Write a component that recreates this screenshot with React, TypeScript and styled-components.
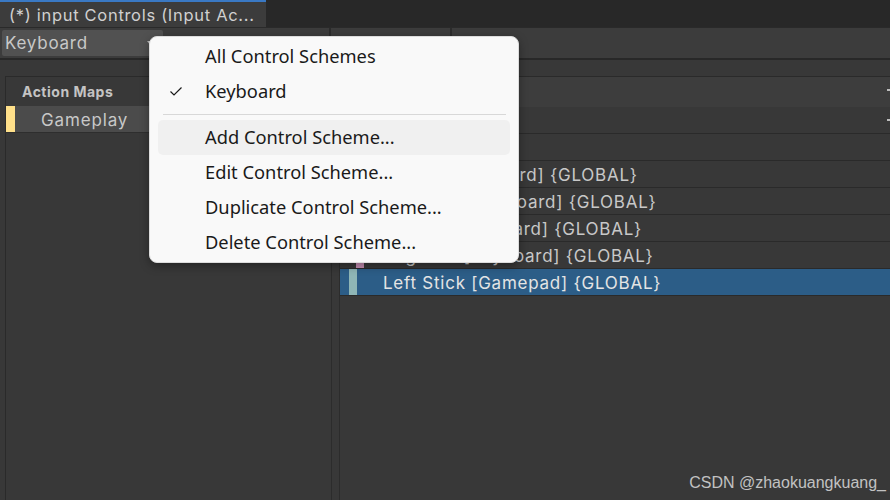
import styled, { createGlobalStyle } from "styled-components";

const GlobalStyle = createGlobalStyle`
  html, body {
    margin: 0;
    padding: 0;
    background: #383838;
  }
  * {
    box-sizing: border-box;
  }
`;

interface IRow {
  label: string;
  kind: "action" | "composite" | "part" | "binding";
  selected?: boolean;
}

const rows: IRow[] = [
  { label: "Move", kind: "action" },
  { label: "WASD", kind: "composite" },
  { label: "Up: W [Keyboard] {GLOBAL}", kind: "part" },
  { label: "Down: S [Keyboard] {GLOBAL}", kind: "part" },
  { label: "Left: A [Keyboard] {GLOBAL}", kind: "part" },
  { label: "Right: D [Keyboard] {GLOBAL}", kind: "part" },
  { label: "Left Stick [Gamepad] {GLOBAL}", kind: "binding", selected: true },
];

const menuItems = [
  { label: "All Control Schemes" },
  { label: "Keyboard", checked: true },
  { separator: true },
  { label: "Add Control Scheme...", hover: true },
  { label: "Edit Control Scheme..." },
  { label: "Duplicate Control Scheme..." },
  { label: "Delete Control Scheme..." },
];

const markerColor = {
  action: "transparent",
  composite: "#8cb9b4",
  part: "#c68fb3",
  binding: "#8fb6b6",
};

const App = () => {
  return (
    <Window>
      <GlobalStyle />
      <TabBar>
        <Tab>(*) input Controls (Input Ac...</Tab>
      </TabBar>
      <Toolbar>
        <SchemeDropdown>
          <span>Keyboard</span>
          <DropArrow />
        </SchemeDropdown>
        <ToolSlot width={166} />
        <ToolDivider />
        <ToolSlot width={119} />
        <ToolDivider />
        <ToolSlot />
      </Toolbar>
      <Body>
        <MapsPanel>
          <PanelHeader>Action Maps</PanelHeader>
          <MapRow>
            <Marker color="#ffe08a" />
            <MapLabel>Gameplay</MapLabel>
          </MapRow>
        </MapsPanel>
        <Splitter />
        <ActionsPanel>
          <ActionsHeader>
            Actions
            <PlusEdge />
          </ActionsHeader>
          {rows.map((r) => (
            <TreeRow key={r.label} kind={r.kind} selected={r.selected}>
              <RowMarker kind={r.kind} color={markerColor[r.kind]} />
              <RowLabel kind={r.kind}>{r.label}</RowLabel>
              {r.kind === "action" && <PlusEdge />}
            </TreeRow>
          ))}
        </ActionsPanel>
      </Body>

      <Menu>
        {menuItems.map((m, i) =>
          m.separator ? (
            <MenuSeparator key={i} />
          ) : (
            <MenuItem key={i} hover={m.hover}>
              {m.checked && (
                <Check viewBox="0 0 16 16">
                  <path d="M2.5 8.5 L6 12 L13.5 4.5" />
                </Check>
              )}
              {m.label}
            </MenuItem>
          )
        )}
      </Menu>
      <Watermark>CSDN @zhaokuangkuang_</Watermark>
    </Window>
  );
};

var Window = styled.div`
  position: relative;
  width: 890px;
  height: 500px;
  overflow: hidden;
  display: flex;
  flex-direction: column;
  background: #383838;
  font-family: Inter, "Liberation Sans", sans-serif;
  color: #c4c4c4;
`;

var TabBar = styled.div`
  display: flex;
  height: 27px;
  background: #282828;
  flex-shrink: 0;
`;

var Tab = styled.div`
  width: 266px;
  display: flex;
  align-items: center;
  padding-left: 9px;
  background: #3c3c3c;
  border-top: 2px solid #3a79c4;
  font-size: 16.5px;
  letter-spacing: 0.7px;
  color: #d0d0d0;
  white-space: nowrap;
  overflow: hidden;
`;

var Toolbar = styled.div`
  display: flex;
  height: 33px;
  flex-shrink: 0;
  background: #3c3c3c;
  border-top: 1px solid #2a2a2a;
  border-bottom: 2px solid #282828;
  padding: 2px 0 2px 2px;
`;

var SchemeDropdown = styled.div`
  position: relative;
  width: 161px;
  display: flex;
  align-items: center;
  padding-left: 3px;
  background: #515151;
  border-radius: 2px;
  font-size: 17px;
  letter-spacing: 0.75px;
  color: #c8c8c8;
`;

var DropArrow = styled.div`
  position: absolute;
  right: 8px;
  top: 11px;
  width: 0;
  height: 0;
  border-left: 4px solid transparent;
  border-right: 4px solid transparent;
  border-top: 5px solid #b8b8b8;
`;

var ToolSlot = styled.div<{ width?: number }>`
  ${({ width }) => (width ? `width: ${width}px;` : "flex: 1;")}
  background: #3c3c3c;
`;

var ToolDivider = styled.div`
  width: 2px;
  margin: -2px 0;
  background: #2c2c2c;
`;

var Body = styled.div`
  flex: 1;
  display: flex;
  padding: 16px 0 0 5px;
  background: #383838;
`;

var MapsPanel = styled.div`
  width: 326px;
  display: flex;
  flex-direction: column;
  border-left: 1px solid #2a2a2a;
  border-top: 1px solid #2a2a2a;
`;

var PanelHeader = styled.div`
  height: 29px;
  display: flex;
  align-items: center;
  padding-left: 16px;
  font-size: 14px;
  font-weight: 700;
  letter-spacing: 0.5px;
  color: #c4c4c4;
  background: #383838;
`;

var MapRow = styled.div`
  height: 27px;
  display: flex;
  align-items: center;
  padding-top: 1px;
  background: #4b4b4b;
  border-bottom: 1px solid #2e2e2e;
`;

var Marker = styled.div<{ color: string }>`
  width: 9px;
  align-self: stretch;
  margin-top: -1px;
  background: ${({ color }) => color};
`;

var MapLabel = styled.span`
  margin-left: 26px;
  font-size: 17px;
  letter-spacing: 0.85px;
  color: #c8c8c8;
`;

var Splitter = styled.div`
  width: 9px;
  background: #383838;
  border-left: 1px solid #2c2c2c;
  border-right: 1px solid #2c2c2c;
`;

var ActionsPanel = styled.div`
  flex: 1;
  display: flex;
  flex-direction: column;
  border-top: 1px solid #2a2a2a;
`;

var ActionsHeader = styled.div`
  position: relative;
  height: 30px;
  display: flex;
  align-items: center;
  padding-left: 16px;
  font-size: 14px;
  font-weight: 700;
  letter-spacing: 0.5px;
  background: #3d3d3d;
`;

/* the add button of the row, cut off by the right edge of the window */
var PlusEdge = styled.span`
  position: absolute;
  right: 0;
  top: 12px;
  width: 3px;
  height: 2px;
  background: #bdbdbd;
`;

var TreeRow = styled.div<{ kind: IRow["kind"]; selected?: boolean }>`
  position: relative;
  height: 27px;
  display: flex;
  align-items: center;
  border-bottom: 1px solid #2a2a2a;
  background: ${({ selected }) => (selected ? "#2c5d87" : "#383838")};
  color: ${({ selected }) => (selected ? "#e4e4e4" : "#c8c8c8")};
`;

var RowMarker = styled.div<{ kind: IRow["kind"]; color: string }>`
  width: 8px;
  align-self: stretch;
  margin-left: ${({ kind }) => (kind === "part" ? 16 : kind === "action" ? 0 : 9)}px;
  background: ${({ color }) => color};
`;

var RowLabel = styled.span<{ kind: IRow["kind"] }>`
  margin-left: ${({ kind }) => (kind === "part" ? 25 : 26)}px;
  padding-top: 2px;
  font-size: 17px;
  letter-spacing: 0.75px;
  white-space: nowrap;
`;

var Menu = styled.div`
  position: absolute;
  left: 149px;
  top: 36px;
  width: 370px;
  height: 227px;
  padding: 2px 8px;
  background: #f9f9f9;
  border: 1px solid #dcdcdc;
  border-radius: 8px;
  box-shadow: 0 3px 10px rgba(0, 0, 0, 0.35);
  font-family: "Noto Sans", "Open Sans", sans-serif;
  color: #1a1a1a;
`;

var MenuItem = styled.div<{ hover?: boolean }>`
  position: relative;
  height: 35px;
  display: flex;
  align-items: center;
  padding: 0 0 3px 47px;
  border-radius: 5px;
  font-size: 18.3px;
  background: ${({ hover }) => (hover ? "#f0f0f0" : "transparent")};
`;

var Check = styled.svg`
  position: absolute;
  left: 10px;
  top: 9px;
  width: 16px;
  height: 16px;
  fill: none;
  stroke: #1a1a1a;
  stroke-width: 1.2;
`;

var MenuSeparator = styled.div`
  height: 1px;
  margin: 5px 4px 5px 5px;
  background: #d8d8d8;
`;

var Watermark = styled.div`
  position: absolute;
  right: 4px;
  bottom: 8px;
  font-family: "Liberation Sans", Arial, sans-serif;
  font-size: 16px;
  color: #c2c2c2;
`;

export default App;
